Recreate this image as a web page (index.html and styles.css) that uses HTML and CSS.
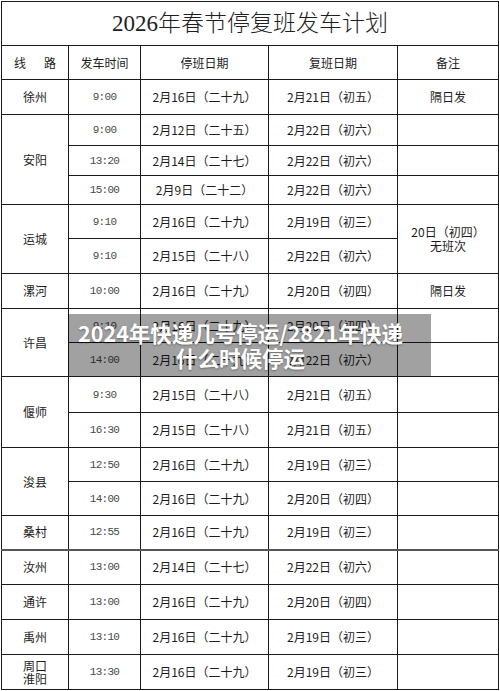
FILE: index.html
```html
<!DOCTYPE html>
<html lang="zh-CN">
<head>
<meta charset="utf-8">
<title>2026年春节停复班发车计划</title>
<link rel="stylesheet" href="styles.css">
</head>
<body>
<div class="page">
  <table class="plan">
    <colgroup>
      <col class="c1"><col class="c2"><col class="c3"><col class="c4"><col class="c5">
    </colgroup>
    <tbody>
      <tr class="r44"><td colspan="5" class="title">2026年春节停复班发车计划</td></tr>
      <tr class="r34 head">
        <td>线&emsp;&ensp;路</td><td>发车时间</td><td>停班日期</td><td>复班日期</td><td>备注</td>
      </tr>
      <tr class="r35">
        <td class="city">徐州</td><td class="time">9:00</td><td>2月16日（二十九）</td><td>2月21日（初五）</td><td class="note">隔日发</td>
      </tr>
      <tr class="r31">
        <td class="city" rowspan="3">安阳</td><td class="time">9:00</td><td>2月12日（二十五）</td><td>2月22日（初六）</td><td></td>
      </tr>
      <tr class="r30">
        <td class="time">13:20</td><td>2月14日（二十七）</td><td>2月22日（初六）</td><td></td>
      </tr>
      <tr class="r29">
        <td class="time">15:00</td><td>2月9日（二十二）</td><td>2月22日（初六）</td><td></td>
      </tr>
      <tr class="r34">
        <td class="city" rowspan="2">运城</td><td class="time">9:10</td><td>2月16日（二十九）</td><td>2月19日（初三）</td><td class="note2" rowspan="2">20日（初四）<br>无班次</td>
      </tr>
      <tr class="r35">
        <td class="time">9:10</td><td>2月15日（二十八）</td><td>2月22日（初六）</td>
      </tr>
      <tr class="r35">
        <td class="city">漯河</td><td class="time">10:00</td><td>2月16日（二十九）</td><td>2月20日（初四）</td><td class="note">隔日发</td>
      </tr>
      <tr class="r34">
        <td class="city" rowspan="2">许昌</td><td class="time">9:10</td><td>2月16日（二十九）</td><td>2月20日（初四）</td><td></td>
      </tr>
      <tr class="r34">
        <td class="time">14:00</td><td>2月16日（二十九）</td><td>2月22日（初六）</td><td></td>
      </tr>
      <tr class="r36">
        <td class="city" rowspan="2">偃师</td><td class="time">9:30</td><td>2月15日（二十八）</td><td>2月21日（初五）</td><td></td>
      </tr>
      <tr class="r35">
        <td class="time">16:30</td><td>2月15日（二十八）</td><td>2月21日（初五）</td><td></td>
      </tr>
      <tr class="r34">
        <td class="city" rowspan="2">浚县</td><td class="time">12:50</td><td>2月16日（二十九）</td><td>2月19日（初三）</td><td></td>
      </tr>
      <tr class="r34">
        <td class="time">14:00</td><td>2月16日（二十九）</td><td>2月20日（初四）</td><td></td>
      </tr>
      <tr class="r34">
        <td class="city">桑村</td><td class="time">12:55</td><td>2月16日（二十九）</td><td>2月19日（初三）</td><td></td>
      </tr>
      <tr class="r35 thick">
        <td class="city">汝州</td><td class="time">13:00</td><td>2月14日（二十七）</td><td>2月22日（初六）</td><td></td>
      </tr>
      <tr class="r35">
        <td class="city">通许</td><td class="time">13:00</td><td>2月16日（二十九）</td><td>2月20日（初四）</td><td></td>
      </tr>
      <tr class="r35">
        <td class="city">禹州</td><td class="time">13:10</td><td>2月16日（二十九）</td><td>2月19日（初三）</td><td></td>
      </tr>
      <tr class="r35">
        <td class="city two">周口<br>淮阳</td><td class="time">13:30</td><td>2月16日（二十九）</td><td>2月19日（初三）</td><td></td>
      </tr>
    </tbody>
  </table>
  <div class="overlay">
    <div class="overlay-text">2024年快递几号停运/2821年快递什么时候停运</div>
  </div>
</div>
</body>
</html>
```

FILE: styles.css
```css
html, body {
  margin: 0;
  padding: 0;
  background: #ffffff;
}

.page {
  position: relative;
  width: 500px;
  height: 691px;
  overflow: hidden;
  font-family: "Noto Sans CJK SC", sans-serif;
  color: #1c1c1c;
}

.plan {
  border-collapse: collapse;
  table-layout: fixed;
  width: 497px;
  margin: 1px 0 0 1px;
  font-size: 12px;
}

.c1 { width: 67px; }
.c2 { width: 72px; }
.c3 { width: 128px; }
.c4 { width: 129px; }
.c5 { width: 101px; }

.plan td {
  border: 1px solid #1a1a1a;
  padding: 0;
  text-align: center;
  vertical-align: middle;
  line-height: 14px;
  white-space: nowrap;
}

.r29 { height: 29px; }
.r30 { height: 30px; }
.r31 { height: 31px; }
.r34 { height: 34px; }
.r35 { height: 35px; }
.r36 { height: 36px; }
.r44 { height: 44px; }

.thick td {
  border-top: 2px solid #555555;
}

.title {
  font-family: "Liberation Serif", "Noto Sans CJK SC", serif;
  font-size: 23px;
  font-weight: 300;
  color: #1e1e24;
}

.head td {
  color: #1c1c1c;
}

.time {
  font-family: "Liberation Mono", monospace;
  font-size: 11px;
  letter-spacing: -0.7px;
  color: #4a4a4a;
}

.note {
  color: #1c1c1c;
}

.note2 {
  line-height: 13px;
}

.plan td.two {
  line-height: 13px;
}

.overlay {
  position: absolute;
  left: 68px;
  top: 314px;
  width: 363px;
  height: 62px;
  background: rgba(0, 0, 0, 0.37);
  display: flex;
  align-items: center;
  box-sizing: border-box;
  padding: 0 22px 0 4px;
}

.overlay-text {
  width: 100%;
  text-align: center;
  color: #ffffff;
  font-family: "Noto Sans CJK SC", sans-serif;
  font-weight: 700;
  font-size: 21.5px;
  line-height: 25px;
  text-shadow: 0 1px 2px rgba(0, 0, 0, 0.35);
}
```
